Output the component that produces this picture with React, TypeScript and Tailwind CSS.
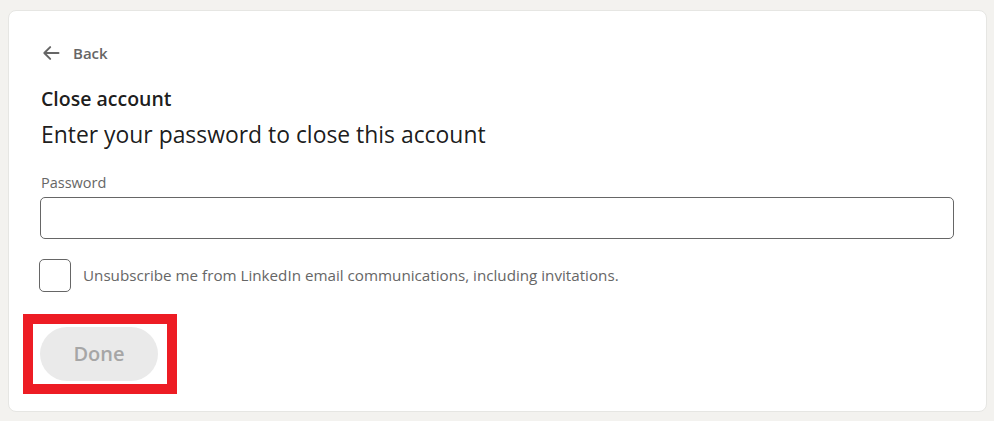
import React from "react";

function BackArrow() {
  return (
    <svg width="20" height="20" viewBox="0 0 24 24" fill="none" className="text-[#666]">
      <path d="M21 12H4.5M11 5l-7 7 7 7" stroke="currentColor" strokeWidth="2.4" strokeLinecap="round" strokeLinejoin="round" />
    </svg>
  );
}

export default function App() {
  return (
    <div className="w-[994px] h-[421px] bg-[#f3f2ef] pt-[10px] pl-[8px] font-['Open_Sans',sans-serif]">
      <div className="relative w-[979px] h-[402px] bg-white rounded-[8px] border border-[#e6e6e3] px-[32px] pt-[30px]">
        <button className="flex items-center gap-[12px] h-[24px] text-[#666] text-[15px] font-semibold">
          <BackArrow />
          <span>Back</span>
        </button>

        <h1 className="mt-[21px] text-[19.5px] leading-[26px] font-semibold text-black/90">Close account</h1>
        <p className="mt-[8px] text-[22.9px] leading-[30px] text-black/90">Enter your password to close this account</p>

        <label className="block mt-[23px] text-[14.5px] leading-[20px] text-[#666]">Password</label>
        <input
          type="password"
          className="mt-[4px] block w-[914px] -ml-px h-[42px] rounded-[5px] border border-[#666] outline-none px-3"
        />

        <div className="mt-[20px] flex items-center gap-[12px] -ml-[2px]">
          <div className="w-[32px] h-[33px] rounded-[5px] border-[1.5px] border-[#666]" />
          <span className="text-[15.2px] text-[#666]">
            Unsubscribe me from LinkedIn email communications, including invitations.
          </span>
        </div>

        <div className="relative mt-[35px] w-fit">
          <button className="w-[118px] h-[54px] rounded-full bg-[#eaeaea] text-[#a6a6a6] text-[20px] font-semibold -ml-px">
            Done
          </button>
          <div className="absolute -left-[18px] -top-[13px] w-[154px] h-[80px] border-[10px] border-[#ed1c24]" />
        </div>
      </div>
    </div>
  );
}
